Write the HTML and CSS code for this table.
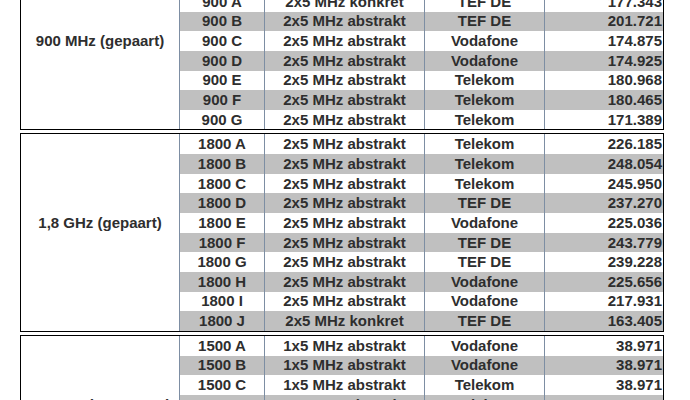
FILE: index.html
```html
<!DOCTYPE html>
<html lang="de">
<head>
<meta charset="utf-8">
<title>Frequenzblöcke</title>
<link rel="stylesheet" href="styles.css">
</head>
<body>
<div class="sheet">
  <section class="band band-900">
    <div class="band-label"><span class="label-text">900 MHz (gepaart)</span></div>
    <div class="rows">
      <div class="row"><span class="c blk">900 A</span><span class="c typ">2x5 MHz konkret</span><span class="c op">TEF DE</span><span class="c val">177.343</span></div>
      <div class="row"><span class="c blk">900 B</span><span class="c typ">2x5 MHz abstrakt</span><span class="c op">TEF DE</span><span class="c val">201.721</span></div>
      <div class="row"><span class="c blk">900 C</span><span class="c typ">2x5 MHz abstrakt</span><span class="c op">Vodafone</span><span class="c val">174.875</span></div>
      <div class="row"><span class="c blk">900 D</span><span class="c typ">2x5 MHz abstrakt</span><span class="c op">Vodafone</span><span class="c val">174.925</span></div>
      <div class="row"><span class="c blk">900 E</span><span class="c typ">2x5 MHz abstrakt</span><span class="c op">Telekom</span><span class="c val">180.968</span></div>
      <div class="row"><span class="c blk">900 F</span><span class="c typ">2x5 MHz abstrakt</span><span class="c op">Telekom</span><span class="c val">180.465</span></div>
      <div class="row"><span class="c blk">900 G</span><span class="c typ">2x5 MHz abstrakt</span><span class="c op">Telekom</span><span class="c val">171.389</span></div>
    </div>
  </section>
  <section class="band band-1800">
    <div class="band-label"><span class="label-text">1,8 GHz (gepaart)</span></div>
    <div class="rows">
      <div class="row"><span class="c blk">1800 A</span><span class="c typ">2x5 MHz abstrakt</span><span class="c op">Telekom</span><span class="c val">226.185</span></div>
      <div class="row"><span class="c blk">1800 B</span><span class="c typ">2x5 MHz abstrakt</span><span class="c op">Telekom</span><span class="c val">248.054</span></div>
      <div class="row"><span class="c blk">1800 C</span><span class="c typ">2x5 MHz abstrakt</span><span class="c op">Telekom</span><span class="c val">245.950</span></div>
      <div class="row"><span class="c blk">1800 D</span><span class="c typ">2x5 MHz abstrakt</span><span class="c op">TEF DE</span><span class="c val">237.270</span></div>
      <div class="row"><span class="c blk">1800 E</span><span class="c typ">2x5 MHz abstrakt</span><span class="c op">Vodafone</span><span class="c val">225.036</span></div>
      <div class="row"><span class="c blk">1800 F</span><span class="c typ">2x5 MHz abstrakt</span><span class="c op">TEF DE</span><span class="c val">243.779</span></div>
      <div class="row"><span class="c blk">1800 G</span><span class="c typ">2x5 MHz abstrakt</span><span class="c op">TEF DE</span><span class="c val">239.228</span></div>
      <div class="row"><span class="c blk">1800 H</span><span class="c typ">2x5 MHz abstrakt</span><span class="c op">Vodafone</span><span class="c val">225.656</span></div>
      <div class="row"><span class="c blk">1800 I</span><span class="c typ">2x5 MHz abstrakt</span><span class="c op">Vodafone</span><span class="c val">217.931</span></div>
      <div class="row"><span class="c blk">1800 J</span><span class="c typ">2x5 MHz konkret</span><span class="c op">TEF DE</span><span class="c val">163.405</span></div>
    </div>
  </section>
  <section class="band band-1500">
    <div class="band-label"><span class="label-text">1,5 GHz (ungepaart)</span></div>
    <div class="rows">
      <div class="row"><span class="c blk">1500 A</span><span class="c typ">1x5 MHz abstrakt</span><span class="c op">Vodafone</span><span class="c val">38.971</span></div>
      <div class="row"><span class="c blk">1500 B</span><span class="c typ">1x5 MHz abstrakt</span><span class="c op">Vodafone</span><span class="c val">38.971</span></div>
      <div class="row"><span class="c blk">1500 C</span><span class="c typ">1x5 MHz abstrakt</span><span class="c op">Telekom</span><span class="c val">38.971</span></div>
      <div class="row"><span class="c blk">1500 D</span><span class="c typ">1x5 MHz abstrakt</span><span class="c op">Telekom</span><span class="c val">38.971</span></div>
      <div class="row"><span class="c blk">1500 E</span><span class="c typ">1x5 MHz abstrakt</span><span class="c op">Telekom</span><span class="c val">38.971</span></div>
      <div class="row"><span class="c blk">1500 F</span><span class="c typ">1x5 MHz abstrakt</span><span class="c op">Vodafone</span><span class="c val">38.971</span></div>
      <div class="row"><span class="c blk">1500 G</span><span class="c typ">1x5 MHz abstrakt</span><span class="c op">TEF DE</span><span class="c val">38.971</span></div>
      <div class="row"><span class="c blk">1500 H</span><span class="c typ">1x5 MHz abstrakt</span><span class="c op">TEF DE</span><span class="c val">38.971</span></div>
    </div>
  </section>
</div>
</body>
</html>
```

FILE: styles.css
```css
* {
  box-sizing: border-box;
}

html, body {
  margin: 0;
  padding: 0;
  background: #ffffff;
}

body {
  font-family: "Liberation Sans", Arial, sans-serif;
  font-weight: bold;
  font-size: 15px;
  color: #2e2e2e;
  overflow: hidden;
}

.sheet {
  margin: -9px 0 0 20px;
  width: 644px;
}

.band {
  display: grid;
  grid-template-columns: 159px 1fr;
  border: 1px solid #000000;
  margin-bottom: 3px;
  background: #ffffff;
}

.band-label {
  display: grid;
  grid-auto-rows: 19.65px;
  border-right: 1px solid #7d8ea3;
}

.label-text {
  display: flex;
  align-items: center;
  justify-content: center;
  white-space: nowrap;
  padding-bottom: 1px;
}

.band-900 .label-text {
  grid-row: 3;
}

.band-1800 .label-text {
  grid-row: 5;
}

.band-1500 .label-text {
  grid-row: 4;
}

.row {
  display: grid;
  grid-template-columns: 85px 160px 120px 1fr;
  height: 19.65px;
}

.row:nth-child(even) {
  background: #c0c0c0;
}

.c {
  display: flex;
  align-items: center;
  justify-content: center;
  border-right: 1px solid #7d8ea3;
  white-space: nowrap;
  overflow: hidden;
  padding-bottom: 1px;
}

.val {
  justify-content: flex-end;
  border-right: 0;
  padding-right: 1px;
}
```
